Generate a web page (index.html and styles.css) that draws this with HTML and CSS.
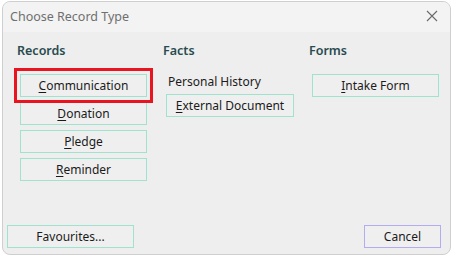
FILE: index.html
```html
<!DOCTYPE html>
<html lang="en">

<head>
    <meta charset="UTF-8">
    <title>Choose Record Type</title>
    <link rel="stylesheet" href="styles.css">
</head>

<body>
    <div class="dialog">
        <div class="titlebar">
            <span class="title">Choose Record Type</span>
            <svg class="close" width="12" height="12" viewBox="0 0 12 12">
                <path d="M1 1 L11 11 M11 1 L1 11" stroke="#6a6a6a" stroke-width="1.1" fill="none" />
            </svg>
        </div>
        <div class="content">
            <div class="columns">
                <div class="column">
                    <h2>Records</h2>
                    <button class="btn focused"><u>C</u>ommunication</button>
                    <button class="btn"><u>D</u>onation</button>
                    <button class="btn"><u>P</u>ledge</button>
                    <button class="btn"><u>R</u>eminder</button>
                </div>
                <div class="column">
                    <h2>Facts</h2>
                    <div class="label">Personal History</div>
                    <button class="btn"><u>E</u>xternal Document</button>
                </div>
                <div class="column">
                    <h2>Forms</h2>
                    <button class="btn"><u>I</u>ntake Form</button>
                </div>
            </div>
            <div class="footer">
                <button class="btn">Favourites...</button>
                <button class="btn cancel">Cancel</button>
            </div>
        </div>
    </div>
</body>

</html>
```

FILE: styles.css
```css
body {
    margin: 0;
    background-color: #ffffff;
    font-family: "Noto Sans", "Open Sans", sans-serif;
}

.dialog {
    margin: 1px 1px 0 2px;
    height: 252px;
    border: 1px solid #cfcfcf;
    border-radius: 8px;
    background-color: #eeeeee;
    overflow: hidden;
    display: flex;
    flex-direction: column;
}

.titlebar {
    height: 30px;
    background-color: #f3f3f3;
    display: flex;
    align-items: center;
    justify-content: space-between;
    padding: 0 12px 0 7px;
}

.title {
    font-size: 12.5px;
    color: #6f6f6f;
    margin-top: -2px;
}

.close {
    margin-top: -2px;
}

.content {
    flex: 1;
    display: flex;
    flex-direction: column;
    justify-content: space-between;
}

.columns {
    display: grid;
    grid-template-columns: 146px 146px 146px;
    padding: 11px 0 0 14px;
}

.column h2 {
    margin: 0 0 15px 0;
    font-size: 12.5px;
    font-weight: 600;
    color: #284b50;
    line-height: 16px;
}

.btn {
    display: block;
    width: 127px;
    height: 23px;
    margin: 0 0 5px 3px;
    padding: 0;
    border: 1px solid #9fe3cf;
    background-color: #efefef;
    font-family: inherit;
    font-size: 12px;
    color: #1b1b1b;
}

.btn u {
    text-decoration-thickness: 1px;
    text-underline-offset: 2px;
}

.focused {
    outline: 3px solid #e8141f;
    outline-offset: 3px;
}

.label {
    font-size: 12px;
    color: #1b1b1b;
    line-height: 16px;
    margin: 0 0 4px 5px;
}

.column .label + .btn {
    width: 128px;
}

.footer {
    display: flex;
    justify-content: space-between;
    padding: 0 9px 6px 4px;
}

.footer .btn {
    margin: 0;
}

.cancel {
    width: 77px;
    border-color: #b3acf2;
}
```
